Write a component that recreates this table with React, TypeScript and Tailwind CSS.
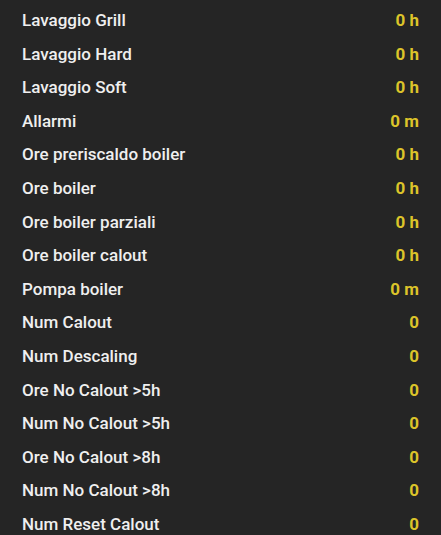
const rows: [string, string][] = [
  ["Lavaggio Grill", "0 h"],
  ["Lavaggio Hard", "0 h"],
  ["Lavaggio Soft", "0 h"],
  ["Allarmi", "0 m"],
  ["Ore preriscaldo boiler", "0 h"],
  ["Ore boiler", "0 h"],
  ["Ore boiler parziali", "0 h"],
  ["Ore boiler calout", "0 h"],
  ["Pompa boiler", "0 m"],
  ["Num Calout", "0"],
  ["Num Descaling", "0"],
  ["Ore No Calout >5h", "0"],
  ["Num No Calout >5h", "0"],
  ["Ore No Calout >8h", "0"],
  ["Num No Calout >8h", "0"],
  ["Num Reset Calout", "0"],
];

export default function App() {
  return (
    <div className="w-[441px] h-[535px] overflow-hidden bg-[#252525] pt-[4px] font-['Roboto',sans-serif]">
      {rows.map(([label, value]) => (
        <div key={label} className="flex h-[33.6px] items-center justify-between pl-[22px] pr-[22px]">
          <span className="text-[17px] font-medium text-[#efefef]">{label}</span>
          <span className="text-[17px] font-bold text-[#dcc42a] whitespace-pre">{value}</span>
        </div>
      ))}
    </div>
  );
}
